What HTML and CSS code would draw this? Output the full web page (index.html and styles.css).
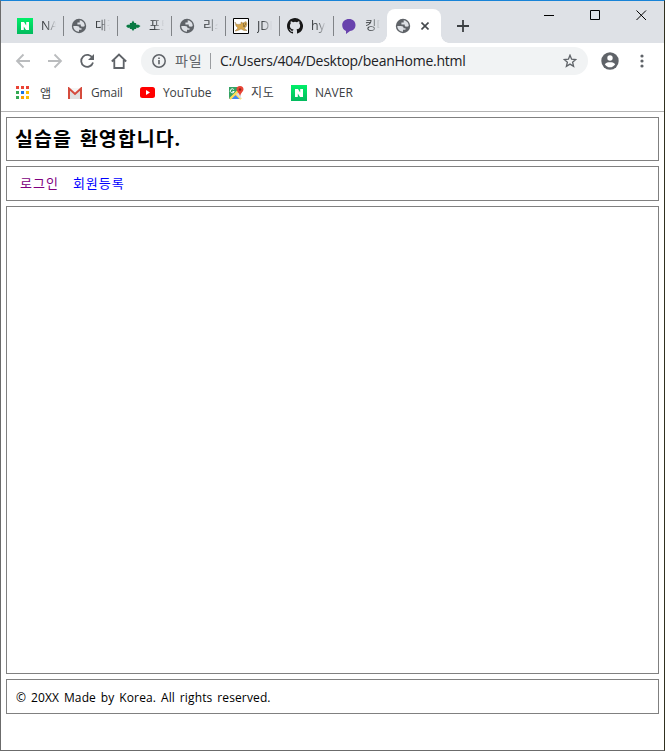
FILE: index.html
```html
<!DOCTYPE html>
<html lang="ko">
<head>
<meta charset="utf-8">
<title>beanHome</title>
<link rel="stylesheet" href="styles.css">
</head>
<body>
<svg width="0" height="0" class="defs">
  <symbol id="globe" viewBox="0 0 16 16">
    <circle cx="8" cy="8" r="7.200" fill="#5f6368"/>
    <path class="land" d="M2.300 8H5.800c1.900 0 2.800.8 2.800 2.200H10.500v1.600H8v1.900C4.800 13.700 2.300 11.300 2.300 8ZM8.700 2.300c2.800.4 5 2.600 5 5.600-.8 1.200-3.500 1-4-.4V6.600H6.400V4.500h2.300Z"/>
  </symbol>
  <symbol id="naver" viewBox="0 0 16 16">
    <linearGradient id="ng" x2="0" y2="1"><stop stop-color="#00ef68"/><stop offset="1" stop-color="#03ba5e"/></linearGradient>
    <path fill="url(#ng)" d="M0 0h16v16H0z"/>
    <path fill="#fff" d="M4 4h3l2.200 3.400V4H12v8H9L6.800 8.600V12H4z"/>
  </symbol>
</svg>
<div class="window">
  <header class="tabs">
    <div class="tab"><svg class="fav"><use href="#naver"/></svg><span>NAVER</span></div>
    <div class="tab"><svg class="fav"><use href="#globe"/></svg><span>대경</span></div>
    <div class="tab"><svg class="fav" viewBox="0 0 16 16"><path fill="#087a43" d="M1 8l2-1.500 1.500.5L5 5h1.500L8 2.500 9.500 5H11l.5 2 1.500-.5L15.500 8 13 10l-1.500-.5L11 11H9.500L8 13l-1.500-2H5l-.5-1.500L3 10z"/></svg><span>포토</span></div>
    <div class="tab"><svg class="fav"><use href="#globe"/></svg><span>리스</span></div>
    <div class="tab"><svg class="fav" viewBox="0 0 16 16"><path fill="#fff" stroke="#000" d="M.5.5h15v15H.5z"/><path fill="#d5a64d" stroke="#8b6d42" stroke-width=".4" d="M2 4c1 3 3 2.500 6 2V4l2 1 3-1.500L14 6l-1 3-2 1 3 2.500h-3L8 11l-2 1-3 1H2l3-3-2-2z"/><path stroke="#222" stroke-width=".7" d="M10 6h1m1 0h1M10 8h2"/></svg><span>JDK</span></div>
    <div class="tab"><svg class="fav" viewBox="0 0 16 16"><path fill="#171717" fill-rule="evenodd" d="M8 0C3.580 0 0 3.580 0 8c0 3.540 2.290 6.530 5.470 7.590.4.070.55-.17.55-.38v-1.490c-2.230.49-2.690-.94-2.690-.94-.36-.92-.89-1.170-.89-1.170-.73-.5.050-.49.050-.49.8.060 1.230.83 1.230.83.71 1.220 1.870.87 2.330.66.070-.52.280-.87.510-1.070-1.780-.2-3.640-.89-3.640-3.950 0-.87.310-1.590.82-2.150-.08-.2-.36-1.020.08-2.120 0 0 .67-.21 2.200.82a7.600 7.600 0 0 1 4 0c1.530-1.040 2.200-.82 2.200-.82.440 1.100.160 1.920.08 2.120.51.560.82 1.270.82 2.150 0 3.070-1.870 3.750-3.650 3.950.29.250.54.730.54 1.480v2.190c0 .21.150.46.550.38A8 8 0 0 0 8 0Z"/></svg><span>hyeon</span></div>
    <div class="tab last"><svg class="fav" viewBox="0 0 16 16"><path fill="#6842ad" d="M8 1c4 0 6.500 2.600 6.500 6 0 3.500-2.500 5.800-5.500 6l-4 3V13C2.500 12 1.200 9.800 1.200 7c0-3.400 3-6 6.800-6Z"/></svg><span>킹다</span></div>
    <div class="tab active"><svg class="fav"><use href="#globe"/></svg><svg class="close" viewBox="0 0 8 8"><path d="M.5.5l7 7m0-7l-7 7" stroke="#45494d" stroke-width="1.600"/></svg></div>
    <svg class="plus" viewBox="0 0 12 12"><path d="M6 0v12M0 6h12" stroke="#3c4043" stroke-width="1.800"/></svg>
    <div class="controls">
      <svg viewBox="0 0 11 11"><path d="M0 6.500h10"/></svg>
      <svg viewBox="0 0 11 11"><path d="M.5.5h9v9h-9z"/></svg>
      <svg viewBox="0 0 11 11"><path d="M.5.5l9.500 9.500m0-9.500l-9.500 9.500"/></svg>
    </div>
  </header>
  <div class="toolbar">
    <svg class="tool" viewBox="0 0 16 16" stroke="#babcbe"><path d="M15 8H2m6.500-6.500L2 8l6.500 6.500"/></svg>
    <svg class="tool" viewBox="0 0 16 16" stroke="#babcbe"><path d="M1 8h13M7.500 1.500L14 8l-6.500 6.500"/></svg>
    <svg class="tool" viewBox="0 0 16 16" stroke="#5f6368"><path d="M13.500 5A6 6 0 1 0 14 9.500"/><path d="M15 1v6H9z" fill="#5f6368" stroke="none"/></svg>
    <svg class="tool" viewBox="0 0 16 16" stroke="#5f6368"><path d="M.8 8.500L8 1.500l7.200 7M3.300 7v8h9.400V7"/></svg>
    <div class="address">
      <svg class="info" viewBox="0 0 14 14"><circle cx="7" cy="7" r="6.200" fill="none" stroke="#5f6368" stroke-width="1.500"/><path d="M7 6v4.300M7 3.400V5" stroke="#5f6368" stroke-width="1.600"/></svg>
      <span class="scheme">파일</span><i></i><span class="url">C:/Users/404/Desktop/beanHome.html</span>
      <svg class="star" viewBox="0 0 14 14"><path d="M7 1.200l1.600 4 4.200.3-3.200 2.700 1 4.200L7 10.100l-3.600 2.300 1-4.200L1.200 5.500l4.200-.3z" fill="none" stroke="#5f6368" stroke-width="1.300"/></svg>
    </div>
    <svg class="user" viewBox="0 0 18 18"><circle cx="9" cy="9" r="8.700" fill="#5f6368"/><circle cx="9" cy="6" r="2.700" fill="#fff"/><path fill="#fff" d="M3.800 12.200c1.200-1.700 3.400-2 5.200-2s4 .3 5.200 2C13 14.200 11 15.300 9 15.300s-4-1.100-5.200-3.100z"/></svg>
    <svg class="dots" viewBox="0 0 4 14" fill="#5f6368"><circle cx="2" cy="2" r="1.600"/><circle cx="2" cy="7" r="1.600"/><circle cx="2" cy="12" r="1.600"/></svg>
  </div>
  <nav class="bookmarks">
    <svg class="apps" viewBox="0 0 13 13"><path fill="#ea4335" d="M0 0h3v3H0zM5 0h3v3H5zM10 0h3v3h-3z"/><path fill="#34a853" d="M0 5h3v3H0zM0 10h3v3H0z"/><path fill="#1a73e8" d="M5 5h3v3H5z"/><path fill="#fbbc04" d="M10 5h3v3h-3zM10 10h3v3h-3z"/><path fill="#fb9f04" d="M5 10h3v3H5z"/></svg><span class="b1">앱</span>
    <svg class="gmail" viewBox="0 0 14 12"><path fill="#e0e0e0" d="M1 1h12v11H1z"/><path fill="#f5f5f5" d="M1 1h12L7 6.500z"/><path fill="none" stroke="#d54b3d" stroke-width="2" d="M1 12V1.500l6 5.500 6-5.500V12"/></svg><span class="b2">Gmail</span>
    <svg class="yt" viewBox="0 0 15 11"><rect width="15" height="11" rx="2.500" fill="#f00"/><path fill="#fff" d="M6 3l4 2.500L6 8z"/></svg><span class="b3">YouTube</span>
    <svg class="map" viewBox="0 0 16 16"><path fill="#34a365" d="M1 2h11v12H1z"/><path fill="#4285f4" d="M7 8l6 6H1z"/><path d="M2 14L13 3M7 8l6 6" stroke="#ffdc55" stroke-width="2.300"/><path fill="#ddd" d="M8 9l5-3v8z"/><path d="M5.800 4.500a2 2 0 1 0 .4 2H4.500" fill="none" stroke="#fff"/><path fill="#e94435" d="M12 1c2.300 0 3.500 1.500 3.500 3.300C15.500 6.500 13 7.500 12 11c-1-3.500-3.500-4.500-3.500-6.700C8.500 2.500 9.700 1 12 1z"/><circle cx="12" cy="4.500" r="1.200" fill="#8c241c"/></svg><span class="b4">지도</span>
    <svg class="nav"><use href="#naver"/></svg><span class="b5">NAVER</span>
  </nav>
  <main>
    <section class="title"><h1>실습을 환영합니다.</h1></section>
    <section class="menu"><a class="visited">로그인</a><a>회원등록</a></section>
    <section class="body"></section>
    <footer><span>© 20XX Made by Korea. All rights reserved.</span></footer>
  </main>
</div>
</body>
</html>
```
FILE: styles.css
```css
* { box-sizing: border-box; }
body { margin: 0; font: 12px "Open Sans", "Noto Sans CJK KR", sans-serif; color: #3c4043; }
svg { display: block; flex: none; }
.defs { position: absolute; }
span, a { white-space: nowrap; }
.window { height: 751px; display: flex; flex-direction: column; background: #fff; border: 1px solid #6b6b6b; border-top-color: #1883d7; border-right-color: #30301f; }
.tabs { height: 42px; background: #dee1e6; display: flex; padding: 8px 0 0 8px; flex: none; }
.tab { width: 54px; height: 34px; display: flex; align-items: center; padding-left: 8px; position: relative; flex: none; }
.tab::after { content: ""; position: absolute; right: -1px; top: 7px; width: 1px; height: 20px; background: #808387; }
.last::after, .active::after { display: none; }
.fav { width: 16px; height: 16px; }
.land { fill: #dee1e6; }
.tab span { width: 15px; margin: -1px 0 0 8px; overflow: hidden; font-size: 12.5px; line-height: 20px; -webkit-mask-image: linear-gradient(90deg, #000 35%, transparent); mask-image: linear-gradient(90deg, #000 35%, transparent); }
.active { background: #fff; border-radius: 8px 8px 0 0; }
.active::before { content: ""; position: absolute; left: -8px; right: -8px; bottom: 0; height: 8px; background: radial-gradient(circle at 0 0, transparent 7.500px, #fff 8px) 0 0/8px 8px no-repeat, radial-gradient(circle at 100% 0, transparent 7.500px, #fff 8px) 100% 0/8px 8px no-repeat; }
.close { width: 8px; height: 8px; margin-left: 10px; }
.plus { width: 12px; height: 12px; margin: 11px 0 0 16px; }
.controls { display: flex; gap: 35px; margin: 1px 17px 0 auto; }
.controls svg { width: 11px; height: 11px; fill: none; stroke: #000; }
.controls svg:first-child { margin-top: -1px; }
.toolbar { height: 36px; flex: none; display: flex; align-items: center; padding-left: 14px; }
.tool { width: 16px; height: 16px; margin-right: 16px; fill: none; stroke-width: 1.800; }
.tool:nth-child(4) { margin-right: 14px; }
.address { width: 447px; height: 28px; border-radius: 14px; background: #f1f3f4; display: flex; align-items: center; padding-left: 11px; font-size: 14px; }
.info { width: 14px; height: 14px; }
.scheme { width: 28px; margin: -2px 0 0 9px; color: #5f6368; letter-spacing: .8px; }
.address i { width: 1px; height: 16px; background: #9a9da0; margin: 0 9px 0 7px; }
.url { color: #202124; letter-spacing: -.26px; margin-top: -1px; }
.star { width: 14px; height: 14px; margin: 0 11px 0 auto; }
.user { width: 18px; height: 18px; margin-left: 13px; }
.dots { width: 4px; height: 14px; margin-left: 21px; }
.bookmarks { height: 33px; flex: none; display: flex; align-items: center; border-bottom: 1px solid #b3b3b3; padding: 0 0 5px 15px; }
.apps { width: 13px; height: 13px; }
.gmail { width: 14px; height: 12px; }
.yt { width: 15px; height: 11px; }
.map, .nav { width: 16px; height: 16px; }
.b1 { width: 12px; margin: 0 16px 0 11px; }
.b2 { width: 32px; margin: 0 17px 0 9px; letter-spacing: -.2px; }
.b3 { width: 49px; margin: 0 16px 0 8px; letter-spacing: -.15px; }
.b4 { width: 24px; margin: -1px 16px 0 7px; letter-spacing: .8px; }
.b5 { margin-left: 8px; }
main { flex: 1; padding: 5px 5px 36px; display: flex; flex-direction: column; gap: 5px; color: #000; }
section, footer { border: 1px solid #808080; display: flex; align-items: center; }
.title { height: 44px; padding-left: 8px; }
h1 { margin: 0; font-size: 19.5px; line-height: 28px; font-weight: 700; letter-spacing: 1px; word-spacing: 2px; }
.menu { height: 35px; padding: 0 0 2px 13px; gap: 14px; font-size: 13px; letter-spacing: 1px; color: #00f; }
.visited { color: #800080; }
.body { flex: 1; }
footer { height: 35px; padding: 1px 0 0 9px; letter-spacing: .13px; word-spacing: 1.600px; }
```
